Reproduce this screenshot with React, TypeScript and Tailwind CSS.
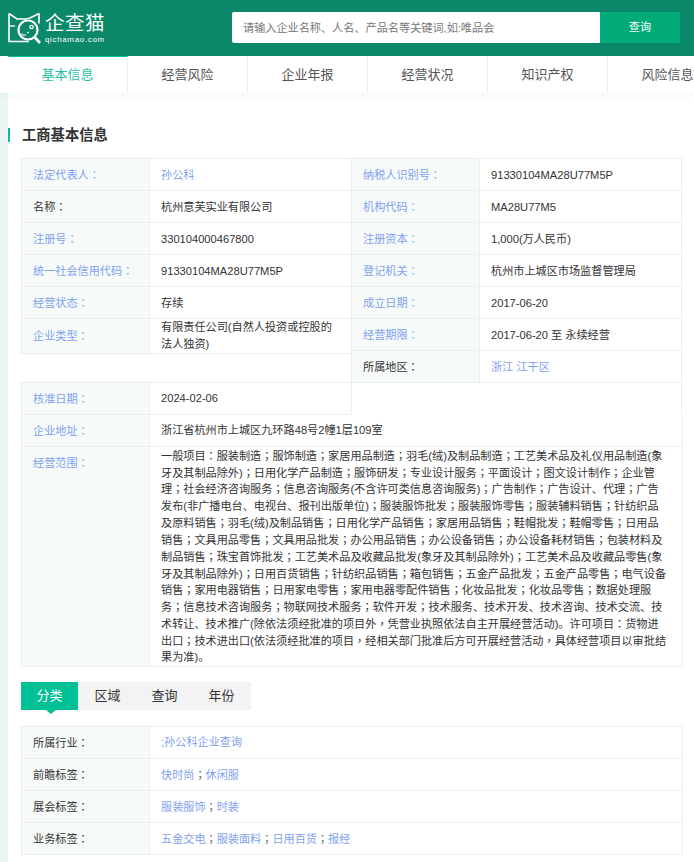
// 企查猫 — company detail page

const NAV = ["基本信息", "经营风险", "企业年报", "经营状况", "知识产权", "风险信息"];
const FILTERS = ["分类", "区域", "查询", "年份"];

// the lines break where the page breaks them
const SCOPE = [
  "一般项目：服装制造；服饰制造；家居用品制造；羽毛(绒)及制品制造；工艺美术品及礼仪用品制造(象",
  "牙及其制品除外)；日用化学产品制造；服饰研发；专业设计服务；平面设计；图文设计制作；企业管",
  "理；社会经济咨询服务；信息咨询服务(不含许可类信息咨询服务)；广告制作；广告设计、代理；广告",
  "发布(非广播电台、电视台、报刊出版单位)；服装服饰批发；服装服饰零售；服装辅料销售；针纺织品",
  "及原料销售；羽毛(绒)及制品销售；日用化学产品销售；家居用品销售；鞋帽批发；鞋帽零售；日用品",
  "销售；文具用品零售；文具用品批发；办公用品销售；办公设备销售；办公设备耗材销售；包装材料及",
  "制品销售；珠宝首饰批发；工艺美术品及收藏品批发(象牙及其制品除外)；工艺美术品及收藏品零售(象",
  "牙及其制品除外)；日用百货销售；针纺织品销售；箱包销售；五金产品批发；五金产品零售；电气设备",
  "销售；家用电器销售；日用家电零售；家用电器零配件销售；化妆品批发；化妆品零售；数据处理服",
  "务；信息技术咨询服务；物联网技术服务；软件开发；技术服务、技术开发、技术咨询、技术交流、技",
  "术转让、技术推广(除依法须经批准的项目外，凭营业执照依法自主开展经营活动)。许可项目：货物进",
  "出口；技术进出口(依法须经批准的项目，经相关部门批准后方可开展经营活动，具体经营项目以审批结",
  "果为准)。",
];

// ── Punctuation sits centred in its box on the page ──
function Cjk({ text }: { text: string }) {
  return (
    <>
      {text.split(/([：；，])/).map((part, i) =>
        i % 2 === 1 ? (
          <span key={i} className="font-['Noto_Sans_CJK_TC',sans-serif]">
            {part}
          </span>
        ) : (
          part
        )
      )}
    </>
  );
}

// ── Logo ──────────────────────────────────────
function Logo() {
  return (
    <div className="flex items-center gap-[4px] w-[232px] pl-2">
      <svg width="33" height="33" viewBox="0 0 33 33" fill="none" stroke="#fff" strokeWidth="1.6">
        <path d="M1 1.500l8 5.500h9l4-1 9-4.500M1 1.500v28h20" />
        <path d="M31 1.500v10" />
        <circle cx="20" cy="18" r="9.500" strokeWidth="2.200" />
        <path d="M26.500 25l5.500 6" strokeWidth="2.600" />
        <circle cx="23.500" cy="15" r="1.700" strokeWidth="1.200" />
        <path d="M13.500 21.500c1 1.800 3 2.200 4.500 1M19 21l2-1" strokeWidth="1.100" />
        <path d="M1 14h6" strokeWidth="1.400" />
      </svg>
      <div className="flex flex-col text-white mt-[-1px]">
        <span className="text-[19.500px] leading-[24px] tracking-[0.5px]">企查猫</span>
        <span className="text-[8px] leading-[9px] tracking-[0.65px]">qichamao.com</span>
      </div>
    </div>
  );
}

// ── Info rows ─────────────────────────────────
function InfoRow({
  label,
  value,
  dark,
  link,
  wrap,
}: {
  label: string;
  value: React.ReactNode;
  dark?: boolean;
  link?: boolean;
  wrap?: boolean;
}) {
  return (
    <div className={`flex border-b border-[#eeeeee] ${wrap ? "" : "h-[32px]"}`}>
      <div
        className={`flex items-center w-[128px] shrink-0 pl-[11px] pt-px bg-[#f6fbf9] border-r border-[#eeeeee] ${
          dark ? "text-[#333]" : "text-[#7f9ff0]"
        }`}
      >
        <span>
          <Cjk text={`${label}：`} />
        </span>
      </div>
      <div
        className={`flex-1 flex items-center pl-[11px] pr-[10px] ${
          wrap ? "leading-[16.85px]" : "pt-px"
        } ${link ? "text-[#7f9ff0]" : "text-[#333]"}`}
      >
        {value}
      </div>
    </div>
  );
}

function Tags({ items }: { items: string[] }) {
  return (
    <span>
      {items.map((t, i) => (
        <span key={t}>
          {i > 0 && <span className="text-[#666] font-['Noto_Sans_CJK_TC',sans-serif]">；</span>}
          <span className="text-[#7f9ff0]">{t}</span>
        </span>
      ))}
    </span>
  );
}

export default function App() {
  return (
    <div className="w-[694px] h-[862px] overflow-hidden bg-white text-[11.15px] text-[#333] font-['Liberation_Sans','Noto_Sans_CJK_SC',sans-serif]">
      {/* Header */}
      <header className="flex items-center h-[56px] bg-[#0b8769]">
        <Logo />
        <div className="flex h-[31px] w-[448px] mt-[-1px]">
          <div className="flex-1 flex items-center pl-[11px] pt-px bg-white rounded-l-[2px] text-[#777]">
            请输入企业名称、人名、产品名等关键词,如:唯品会
          </div>
          <button className="w-[80px] bg-[#00ab78] text-white">查询</button>
        </div>
      </header>

      {/* Tabs */}
      <nav className="relative z-10 flex h-[37px] pl-2 bg-white text-[13px] text-[#555] shadow-[0_2px_6px_rgba(20,150,130,0.08)]">
        {NAV.map((item, i) => (
          <div
            key={item}
            className={`shrink-0 w-[120px] flex items-center justify-center border-r border-[#eeeeee] ${
              i === 0 ? "border-t border-t-[#00c096] text-[#1fbf9f]" : ""
            }`}
          >
            {item}
          </div>
        ))}
      </nav>

      <div className="flex h-[769px]">
        <div className="w-2 shrink-0 bg-[#edf4f6]" />
        <main className="flex-1 pr-[11px]">
          {/* Section title */}
          <div className="flex items-center h-[14px] mt-[35px] border-l-2 border-[#00c096] pl-3 pt-px text-[14.3px] font-bold text-[#333]">
            工商基本信息
          </div>

          {/* Basic info */}
          <div className="flex ml-[13px] mt-[16px] w-[661px] border-t border-[#eeeeee] box-border">
            <div className="w-[330px] shrink-0">
              <div className="border-l border-[#eeeeee]">
                <InfoRow label="法定代表人" value="孙公科" link />
                <InfoRow label="名称" value="杭州意芙实业有限公司" dark />
                <InfoRow label="注册号" value="330104000467800" />
                <InfoRow label="统一社会信用代码" value="91330104MA28U77M5P" />
                <InfoRow label="经营状态" value="存续" />
                <InfoRow label="企业类型" value="有限责任公司(自然人投资或控股的法人独资)" wrap />
              </div>
              <div className="h-[29px] border-b border-[#eeeeee]" />
              <div className="border-l border-[#eeeeee]">
                <InfoRow label="核准日期" value="2024-02-06" />
              </div>
            </div>
            <div className="flex-1 border-x border-[#eeeeee] self-stretch">
              <InfoRow label="纳税人识别号" value="91330104MA28U77M5P" />
              <InfoRow label="机构代码" value="MA28U77M5" />
              <InfoRow label="注册资本" value="1,000(万人民币)" />
              <InfoRow label="登记机关" value="杭州市上城区市场监督管理局" />
              <InfoRow label="成立日期" value="2017-06-20" />
              <InfoRow label="经营期限" value="2017-06-20 至 永续经营" />
              <InfoRow label="所属地区" value="浙江 江干区" dark link />
            </div>
          </div>

          {/* Full width rows */}
          <div className="ml-[13px] w-[662px] border-x border-[#eeeeee]">
            <InfoRow label="企业地址" value="浙江省杭州市上城区九环路48号2幢1层109室" />
            <div className="flex border-b border-[#eeeeee]">
              <div className="w-[128px] shrink-0 pl-[11px] bg-[#f6fbf9] border-r border-[#eeeeee] leading-[30px] text-[#7f9ff0]">
                <Cjk text="经营范围：" />
              </div>
              <div className="flex-1 pl-[11px] leading-[16.85px] whitespace-nowrap">
                {SCOPE.map((line) => (
                  <div key={line} className="h-[16.85px]">
                    <Cjk text={line} />
                  </div>
                ))}
              </div>
            </div>
          </div>

          {/* Filter tabs */}
          <div className="flex ml-[13px] mt-[15px] w-[230px] h-[28px] bg-[#f3f3f3] text-[13px]">
            {FILTERS.map((f, i) => (
              <div
                key={f}
                className={`relative w-[57px] flex items-center justify-center ${
                  i === 0 ? "bg-[#00c096] text-white mr-px" : "text-[#333]"
                }`}
              >
                {f}
                {i === 0 && (
                  <span className="absolute top-full left-[25px] border-x-[5px] border-t-[4px] border-x-transparent border-t-[#00c096]" />
                )}
              </div>
            ))}
          </div>

          {/* Tags */}
          <div className="ml-[13px] mt-[16px] w-[662px] border-x border-t border-[#eeeeee]">
            <InfoRow label="所属行业" value={<span className="text-[#7f9ff0]">;孙公科企业查询</span>} dark />
            <InfoRow label="前瞻标签" value={<Tags items={["快时尚", "休闲服"]} />} dark />
            <InfoRow label="展会标签" value={<Tags items={["服装服饰", "时装"]} />} dark />
            <InfoRow label="业务标签" value={<Tags items={["五金交电", "服装面料", "日用百货", "报经"]} />} dark />
          </div>
        </main>
      </div>
    </div>
  );
}
